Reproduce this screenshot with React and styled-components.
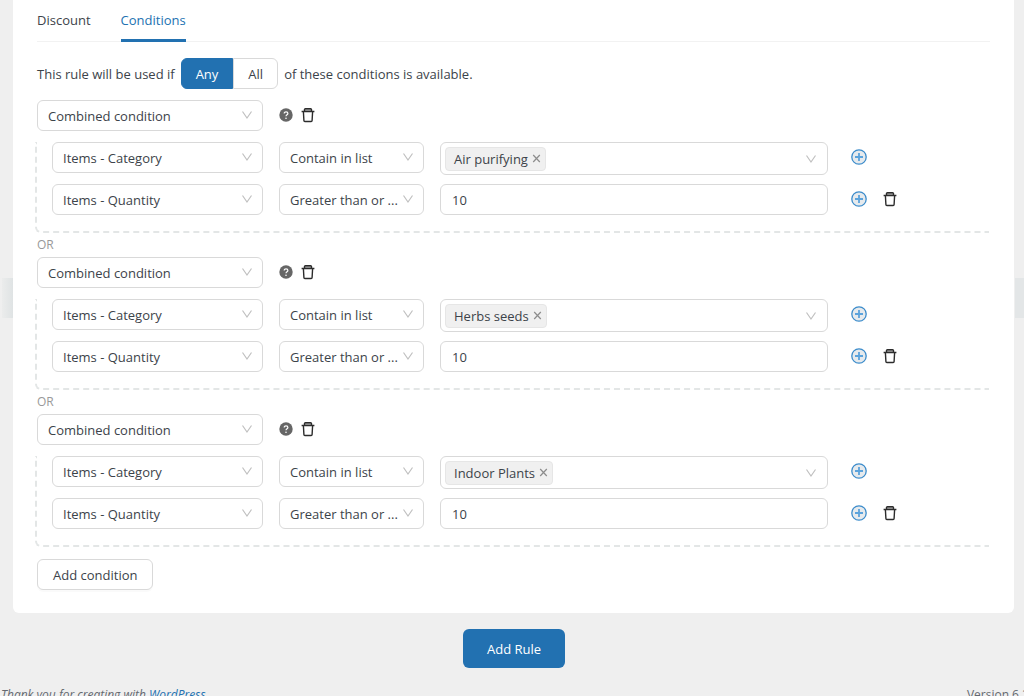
import React, { useState } from "react";
import styled, { createGlobalStyle } from "styled-components";

const GlobalStyle = createGlobalStyle`
  * {
    box-sizing: border-box;
  }

  html {
    background-color: #efefef;
  }

  body {
    margin: 0;
    overflow: hidden;
    color: #3c434a;
    font-family: "Open Sans", "Noto Sans", sans-serif;
    font-size: 13px;
    line-height: 20px;
  }

  button,
  input,
  select {
    font: inherit;
    color: inherit;
  }
`;

const Page = styled.div`
  display: flex;
  flex-direction: column;
`;

const CardArea = styled.div`
  padding: 0 10px 0 13px;
  background:
    linear-gradient(to right, #ebecec, #dfe3e4) 2px 278px / 11px 40px no-repeat,
    linear-gradient(#e3e6e7, #e3e6e7) right 278px / 9px 40px no-repeat;
`;

const Card = styled.main`
  padding: 0 24px 23px;
  background-color: #fff;
  border-radius: 0 0 6px 6px;
`;

const Tabs = styled.nav`
  display: flex;
  gap: 30px;
  margin-bottom: 16px;
  border-bottom: 1px solid #f2f2f2;
`;

const Tab = styled.button`
  height: 42px;
  margin-bottom: -1px;
  padding: 1px 0 0;
  border: none;
  border-bottom: 3px solid ${(props) => (props.$active ? "#2271b1" : "transparent")};
  background: none;
  color: ${(props) => (props.$active ? "#2271b1" : "#3c434a")};
  cursor: pointer;
`;

const MatchLine = styled.div`
  display: flex;
  align-items: center;
  gap: 6px;
  margin-bottom: 11px;
`;

const Toggle = styled.div`
  display: flex;
`;

const ToggleButton = styled.button`
  height: 31px;
  padding: 0 14px;
  border: 1px solid ${(props) => (props.$active ? "#2271b1" : "#d9d9d9")};
  background-color: ${(props) => (props.$active ? "#2271b1" : "#fff")};
  color: ${(props) => (props.$active ? "#fff" : "#3c434a")};
  cursor: pointer;

  &:first-child {
    border-radius: 6px 0 0 6px;
  }

  &:last-child {
    border-radius: 0 6px 6px 0;
  }
`;

const GroupHeader = styled.div`
  display: grid;
  grid-template-columns: 226px auto;
  justify-content: start;
  align-items: start;
  gap: 16px;
  margin-bottom: 11px;
`;

const Actions = styled.div`
  display: flex;
  align-items: center;
  gap: ${(props) => props.$gap}px;
  height: 29px;
`;

const GroupBody = styled.div`
  display: grid;
  gap: 9px;
  margin: 0 1px 0 -2px;
  padding: 0 0 16px 15px;
  border: 2px dashed #e3e6e6;
  border-width: 0 0 2px 2px;
  border-radius: 0 0 0 6px;
`;

const Row = styled.div`
  display: grid;
  grid-template-columns: 211px 145px minmax(0, 1fr) 145px;
  gap: 16px;
  align-items: start;

  > :last-child {
    margin-left: 7px;
  }
`;

const SelectBox = styled.div`
  position: relative;
  display: grid;

  svg {
    position: absolute;
    top: 9px;
    right: 10px;
    pointer-events: none;
  }
`;

const Select = styled.select`
  width: 100%;
  height: 31px;
  padding: 0 24px 0 10px;
  appearance: none;
  border: 1px solid #d9d9d9;
  border-radius: 6px;
  background-color: #fff;
  cursor: pointer;
`;

const TextInput = styled.input`
  width: 100%;
  height: 31px;
  padding: 0 11px;
  border: 1px solid #d9d9d9;
  border-radius: 6px;
  background-color: #fff;
`;

const TagSelect = styled.div`
  display: flex;
  align-items: center;
  height: 33px;
  padding: 0 10px 0 4px;
  border: 1px solid #d9d9d9;
  border-radius: 6px;
`;

const Tag = styled.span`
  display: flex;
  align-items: center;
  gap: 4px;
  height: 24px;
  padding: 0 4px 0 8px;
  border: 1px solid #e6e6e6;
  border-radius: 4px;
  background-color: #f0f0f0;
  white-space: nowrap;
`;

const TagSearch = styled.input`
  flex: 1;
  min-width: 0;
  border: none;
  outline: none;
  background: none;
`;

const IconButton = styled.button`
  display: flex;
  padding: 0;
  border: none;
  background: none;
  color: #2c2c2c;
  cursor: pointer;
`;

const OrLabel = styled.div`
  height: 24px;
  color: #999;
  font-size: 12px;
  line-height: 24px;
`;

const DefaultButton = styled.button`
  height: 31px;
  margin-top: 12px;
  padding: 0 15px;
  border: 1px solid #d9d9d9;
  border-radius: 6px;
  background-color: #fff;
  box-shadow: 0 2px 0 rgba(0, 0, 0, 0.02);
  cursor: pointer;
`;

const SubmitBar = styled.div`
  display: flex;
  justify-content: center;
  padding: 16px 0 17px 4px;
`;

const SubmitButton = styled.button`
  height: 39px;
  padding: 0 24px;
  border: none;
  border-radius: 6px;
  background-color: #2271b1;
  color: #fff;
  cursor: pointer;
`;

const Footer = styled.footer`
  display: flex;
  justify-content: space-between;
  margin-right: -5px;
  padding-left: 1px;
  color: #646970;
  font-size: 12px;
  white-space: nowrap;

  a {
    color: #2271b1;
  }
`;

const ChevronIcon = () => (
  <svg width="12" height="12" viewBox="0 0 12 12" fill="none" stroke="#c0c0c0" strokeWidth="1.2">
    <path d="M1.5 2.5 6 9 10.5 2.5" />
  </svg>
);

const TrashIcon = () => (
  <svg width="14" height="16" viewBox="0 0 14 16" fill="none" stroke="currentColor" strokeWidth="1.4">
    <path d="M4 1.8h6v2.2H4z" fill="#aaa" stroke="none" />
    <path d="M.6 4.5h12.8M3.5 4.3V2.6q0-.9.9-.9h5.2q.9 0 .9.9v1.7M2.4 4.7l.5 8.8q0 1 1 1h6.2q1 0 1-1l.5-8.8" />
  </svg>
);

const HelpIcon = () => (
  <svg width="14" height="14" viewBox="0 0 14 14" fill="none">
    <circle cx="7" cy="7" r="6.7" fill="#666" />
    <path d="M5.2 5.5c0-2.3 3.7-2.2 3.7 0C8.9 6.8 7 6.8 7 8.3" stroke="#fff" strokeWidth="1.2" />
    <circle cx="7" cy="10.2" r=".8" fill="#fff" />
  </svg>
);

const PlusIcon = () => (
  <svg width="16" height="16" viewBox="0 0 16 16" fill="none">
    <circle cx="8" cy="8" r="7.2" fill="#e6eaed" stroke="#3c8ccb" strokeWidth="1.3" />
    <path d="M8 4v8M4 8h8" stroke="#5ba3dc" strokeWidth="1.8" />
  </svg>
);

const CloseIcon = () => (
  <svg width="9" height="9" viewBox="0 0 9 9" stroke="#8c8c8c" strokeWidth="1.2">
    <path d="M1.2 1l6.6 7M7.8 1 1.2 8" />
  </svg>
);

const groups = [
  { id: 1, category: "Air purifying", quantity: "10" },
  { id: 2, category: "Herbs seeds", quantity: "10" },
  { id: 3, category: "Indoor Plants", quantity: "10" },
];

function SelectField({ label, value }) {
  return (
    <SelectBox>
      <Select aria-label={label} defaultValue={value}>
        <option>{value}</option>
      </Select>
      <ChevronIcon />
    </SelectBox>
  );
}

function ConditionGroup({ category, quantity }) {
  return (
    <section>
      <GroupHeader>
        <SelectField label="Condition type" value="Combined condition" />
        <Actions $gap={8}>
          <IconButton aria-label="Help">
            <HelpIcon />
          </IconButton>
          <IconButton aria-label="Delete group">
            <TrashIcon />
          </IconButton>
        </Actions>
      </GroupHeader>
      <GroupBody>
        <Row>
          <SelectField label="Condition" value="Items - Category" />
          <SelectField label="Method" value="Contain in list" />
          <TagSelect>
            <Tag>
              {category}
              <IconButton aria-label={`Remove ${category}`}>
                <CloseIcon />
              </IconButton>
            </Tag>
            <TagSearch aria-label="Categories" />
            <ChevronIcon />
          </TagSelect>
          <Actions $gap={16}>
            <IconButton aria-label="Add condition row">
              <PlusIcon />
            </IconButton>
          </Actions>
        </Row>
        <Row>
          <SelectField label="Condition" value="Items - Quantity" />
          <SelectField label="Method" value="Greater than or ..." />
          <TextInput aria-label="Quantity" defaultValue={quantity} />
          <Actions $gap={16}>
            <IconButton aria-label="Add condition row">
              <PlusIcon />
            </IconButton>
            <IconButton aria-label="Delete condition row">
              <TrashIcon />
            </IconButton>
          </Actions>
        </Row>
      </GroupBody>
    </section>
  );
}

export default function App() {
  const [tab, setTab] = useState("Conditions");
  const [match, setMatch] = useState("Any");

  return (
    <Page>
      <GlobalStyle />
      <CardArea>
        <Card>
          <Tabs>
            {["Discount", "Conditions"].map((name) => (
              <Tab key={name} $active={tab === name} onClick={() => setTab(name)}>
                {name}
              </Tab>
            ))}
          </Tabs>
          <MatchLine>
            <span>This rule will be used if</span>
            <Toggle>
              {["Any", "All"].map((name) => (
                <ToggleButton key={name} $active={match === name} onClick={() => setMatch(name)}>
                  {name}
                </ToggleButton>
              ))}
            </Toggle>
            <span>of these conditions is available.</span>
          </MatchLine>
          {groups.map((group, index) => (
            <React.Fragment key={group.id}>
              {index > 0 && <OrLabel>OR</OrLabel>}
              <ConditionGroup category={group.category} quantity={group.quantity} />
            </React.Fragment>
          ))}
          <DefaultButton>Add condition</DefaultButton>
        </Card>
      </CardArea>
      <SubmitBar>
        <SubmitButton>Add Rule</SubmitButton>
      </SubmitBar>
      <Footer>
        <em>
          Thank you for creating with <a href="#wordpress">WordPress</a>.
        </em>
        <span>Version 6.2</span>
      </Footer>
    </Page>
  );
}
